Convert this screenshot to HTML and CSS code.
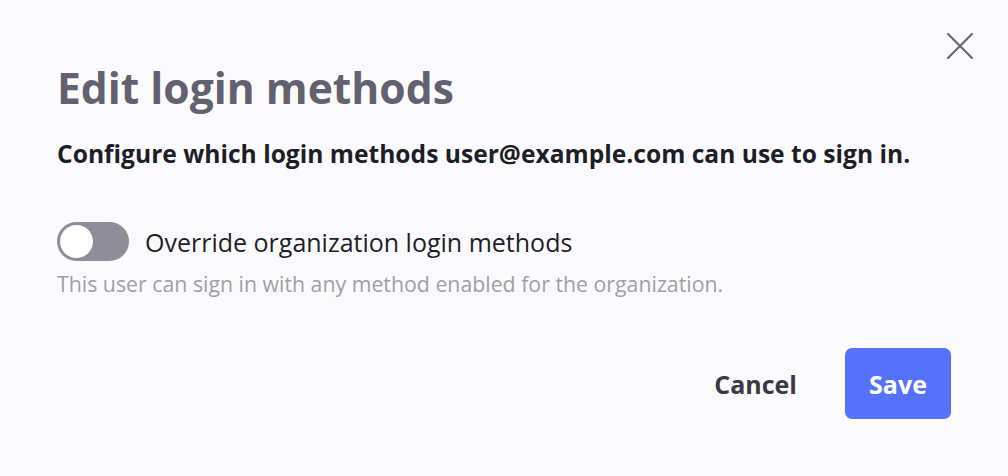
FILE: index.html
```html
<!DOCTYPE html>
<html>
<head>
<meta charset="utf-8">
<link rel="stylesheet" href="styles.css">
</head>
<body>
<div class="dialog">
  <button class="close" aria-label="Close">
    <svg width="28" height="28" viewBox="0 0 28 28"><path d="M2 2 L26 26 M26 2 L2 26" stroke="#6b6b74" stroke-width="2.2" stroke-linecap="round" fill="none"/></svg>
  </button>
  <h1 class="title">Edit login methods</h1>
  <p class="subtitle">Configure which login methods user@example.com can use to sign in.</p>
  <div class="toggle-row">
    <span class="switch"><span class="knob"></span></span>
    <span class="toggle-label">Override organization login methods</span>
  </div>
  <p class="help">This user can sign in with any method enabled for the organization.</p>
  <div class="actions">
    <button class="btn cancel">Cancel</button>
    <button class="btn save">Save</button>
  </div>
</div>
</body>
</html>
```
FILE: styles.css
```css
html, body {
  margin: 0;
  padding: 0;
  background: #fbfbfd;
  width: 1008px;
  height: 476px;
  overflow: hidden;
}
.dialog {
  position: relative;
  padding: 58.5px 57px 0 57px;
  font-family: "Open Sans", "Noto Sans", sans-serif;
}
.close {
  position: absolute;
  top: 32px;
  right: 34px;
  background: none;
  border: 0;
  padding: 0;
  width: 28px;
  height: 28px;
  cursor: pointer;
}
.title {
  margin: 0;
  font-size: 42.6px;
  line-height: 56px;
  font-weight: 700;
  color: #626170;
}
.subtitle {
  margin: 23px 0 0 0;
  font-size: 24.6px;
  line-height: 32px;
  font-weight: 700;
  color: #1e1e28;
}
.toggle-row {
  display: flex;
  align-items: center;
  gap: 16px;
  margin-top: 52.6px;
  height: 39px;
}
.switch {
  width: 72px;
  height: 39px;
  border-radius: 20px;
  background: #8e8d98;
  display: flex;
  align-items: center;
  padding-left: 3px;
  box-sizing: border-box;
  flex: none;
}
.knob {
  width: 33px;
  height: 33px;
  border-radius: 50%;
  background: #ffffff;
}
.toggle-label {
  font-size: 25px;
  line-height: 34px;
  color: #1e1e28;
}
.help {
  margin: 8.7px 0 0 0;
  font-size: 21.3px;
  line-height: 28px;
  color: #a09fa9;
}
.actions {
  display: flex;
  justify-content: flex-end;
  align-items: center;
  gap: 48px;
  margin-top: 50.3px;
}
.btn {
  font-family: inherit;
  font-size: 25px;
  line-height: 34px;
  font-weight: 700;
  border: 0;
  cursor: pointer;
}
.cancel {
  background: none;
  color: #3b3a44;
  padding: 0;
}
.save {
  background: #5672fa;
  color: #ffffff;
  width: 106px;
  height: 71px;
  border-radius: 7px;
  padding: 0;
}
```
